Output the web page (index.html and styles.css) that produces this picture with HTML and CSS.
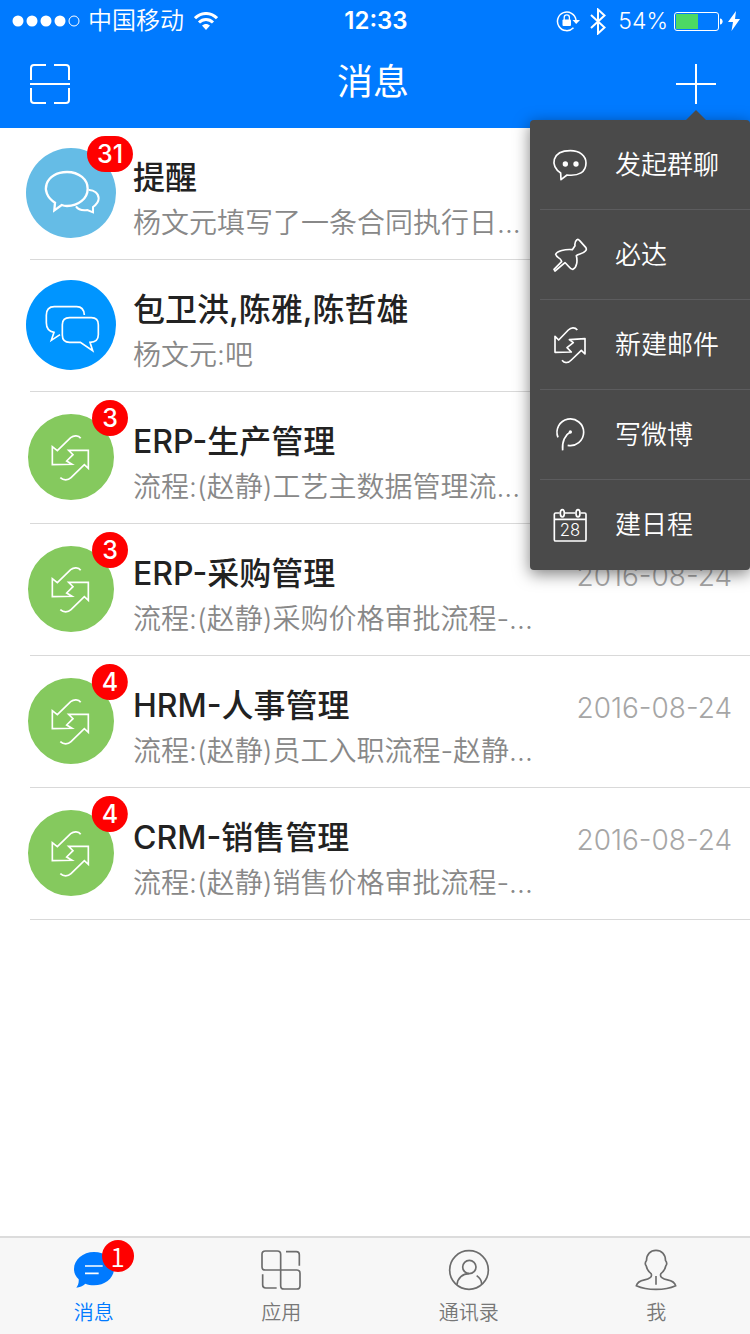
FILE: index.html
```html
<!DOCTYPE html>
<html lang="zh-CN">
<head>
<meta charset="utf-8">
<meta name="viewport" content="width=device-width, initial-scale=1">
<title>消息</title>
<link rel="stylesheet" href="styles.css">
</head>
<body>
<svg class="defs" aria-hidden="true">
  <symbol id="flow" viewBox="0 0 270 270">
    <path d="M164 79C158 70 144 69 134 77L94 116L79 104V158L138 157L122 147L141 128L128 115H187V169L175 158L135 197C126 206 112 206 103 197"/>
  </symbol>
</svg>
<header class="header">
  <div class="status">
    <div class="status-side">
      <svg class="signal" viewBox="0 0 68 12" aria-hidden="true"><g fill="#fff"><circle cx="6" cy="6" r="5.5"/><circle cx="20" cy="6" r="5.5"/><circle cx="34" cy="6" r="5.5"/><circle cx="48" cy="6" r="5.5"/></g><circle cx="62" cy="6" r="5" fill="none" stroke="#fff"/></svg>
      <span class="carrier">中国移动</span>
      <svg class="wifi" viewBox="0 0 24 18" aria-hidden="true"><g fill="none" stroke="#fff" stroke-width="3"><path d="M1 6.2C7.200-.1 16.800-.1 23 6.200"/><path d="M5 10.500C9 6.500 15 6.500 19 10.500"/></g><path d="M8 13.600C10.300 11.400 13.700 11.400 16 13.600L12 18Z" fill="#fff"/></svg>
    </div>
    <time class="clock">12:33</time>
    <div class="status-side status-right">
      <svg class="lock" viewBox="0 0 24 22" aria-hidden="true"><path d="M17.500 17.800A9.300 9.300 0 1 1 20 10" fill="none" stroke="#fff" stroke-width="1.500"/><path d="M16.500 10H24L20.200 14Z" fill="#fff"/><rect x="6.500" y="9.500" width="8.500" height="6.500" rx="1" fill="#fff"/><path d="M8.200 10V7.500a2.600 2.600 0 0 1 5.200 0V10" fill="none" stroke="#fff" stroke-width="1.300"/></svg>
      <svg class="bluetooth" viewBox="0 0 16 27" aria-hidden="true"><path d="M1 7L14.500 19.500L8 25.500V1.500L14.500 7.500L1 20" fill="none" stroke="#fff" stroke-width="2"/></svg>
      <span class="percent">54%</span>
      <svg class="battery" viewBox="0 0 49 19" aria-hidden="true"><rect x=".5" y=".5" width="44" height="18" rx="2.500" fill="none" stroke="#fff"/><rect x="2" y="2" width="22" height="15" fill="#4cd964"/><path d="M46 6.500C49.500 6.500 49.500 12.500 46 12.500Z" fill="#fff"/></svg>
      <svg class="bolt" viewBox="0 0 12 20" aria-hidden="true"><path d="M8 0L0 11H5L3.500 20L12 8H7Z" fill="#fff"/></svg>
    </div>
  </div>
  <div class="nav">
    <button class="icon-button" type="button" aria-label="扫一扫">
      <svg viewBox="0 0 40 40"><path d="M1 16V4a3 3 0 0 1 3-3H16M24 1H36a3 3 0 0 1 3 3V16M0 20H40M1 24V36a3 3 0 0 0 3 3H16M24 39H36a3 3 0 0 0 3-3V24"/></svg>
    </button>
    <h1 class="page-title">消息</h1>
    <button class="icon-button icon-add" type="button" aria-label="新建" aria-expanded="true">
      <svg viewBox="0 0 40 40"><path d="M20 0V40M0 20H40"/></svg>
    </button>
  </div>
  <nav class="menu" aria-label="新建">
    <button class="menu-item" type="button"><svg class="menu-icon" viewBox="0 0 102 102"><path d="M23 75C-10 55-4 8 52 8C80 8 99 23 99 45C99 72 78 85 42 81L24 95Z"/><g fill="#fff" stroke="none"><circle cx="37" cy="48" r="8"/><circle cx="69" cy="48" r="8"/></g></svg><span>发起群聊</span></button>
    <button class="menu-item" type="button"><svg class="menu-icon" viewBox="0 0 102 102"><path d="M72 5Q64 12 66 23L58 35C36 33 12 39 8 49C11 60 22 60 24 66L26 71L3 94L6 99L36 74C46 82 52 96 60 94C72 88 74 68 70 53C78 46 88 50 98 38Q102 34 98 28L80 8Q76 3 72 5Z"/></svg><span>必达</span></button>
    <button class="menu-item" type="button"><svg class="menu-icon" viewBox="0 8 102 102"><path d="M73 14C66 5 54 6 46 14L17 44L6 33V81L55 80L42 67L61 52L49 43L96 40V86L85 75L55 104C46 114 34 114 27 105"/></svg><span>新建邮件</span></button>
    <button class="menu-item" type="button"><svg class="menu-icon" viewBox="0 4 102 102"><path d="M15 62A40 40 0 1 1 44 86M52 46C37 54 26 74 29 101"/><circle cx="52" cy="46" r="5" fill="#fff" stroke="none"/></svg><span>写微博</span></button>
    <button class="menu-item" type="button"><svg class="menu-icon" viewBox="0 0 102 102"><path d="M20 15H8Q4 15 4 19V95Q4 99 8 99H95Q99 99 99 95V19Q99 15 95 15H83M36 15H67M4 34H99"/><ellipse cx="28" cy="16" rx="6" ry="11"/><ellipse cx="75" cy="16" rx="6" ry="11"/><text class="menu-day" x="51" y="83">28</text></svg><span>建日程</span></button>
  </nav>
</header>

<main class="main">
  <ul class="list">
    <li class="entry"><div class="row">
      <div class="avatar avatar-notice"><svg viewBox="0 0 270 270"><path stroke-width="7" d="M87 164C38 134 58 72 123 72C160 72 185 95 185 122C185 151 158 174 123 174C117 174 112 173 107 171L85 187Z"/><path stroke-width="6" d="M188 126C204 125 218 137 218 151C218 163 210 171 201 177V193L184 186C170 188 156 184 150 175"/></svg><span class="badge">31</span></div>
      <h2 class="name">提醒</h2><p class="preview">杨文元填写了一条合同执行日...</p>
    </div></li>
    <li class="entry"><div class="row">
      <div class="avatar avatar-group"><svg viewBox="0 0 270 270"><path d="M175 105C174 88 167 80 152 80H85C68 80 61 90 61 106V128C61 146 68 154 84 157L76 181L102 164"/><path d="M131 113H196Q217 113 217 134V164Q217 186 192 187L200 212L163 187H131Q109 187 109 165V134Q109 113 131 113Z"/></svg></div>
      <h2 class="name">包卫洪,陈雅,陈哲雄</h2><p class="preview">杨文元:吧</p>
    </div></li>
    <li class="entry"><div class="row">
      <div class="avatar avatar-flow"><svg><use href="#flow"/></svg><span class="badge">3</span></div>
      <h2 class="name">ERP-生产管理</h2><p class="preview">流程:(赵静)工艺主数据管理流...</p>
    </div></li>
    <li class="entry"><div class="row">
      <div class="avatar avatar-flow"><svg><use href="#flow"/></svg><span class="badge">3</span></div>
      <h2 class="name">ERP-采购管理</h2><time class="date">2016-08-24</time><p class="preview">流程:(赵静)采购价格审批流程-...</p>
    </div></li>
    <li class="entry"><div class="row">
      <div class="avatar avatar-flow"><svg><use href="#flow"/></svg><span class="badge">4</span></div>
      <h2 class="name">HRM-人事管理</h2><time class="date">2016-08-24</time><p class="preview">流程:(赵静)员工入职流程-赵静...</p>
    </div></li>
    <li class="entry"><div class="row">
      <div class="avatar avatar-flow"><svg><use href="#flow"/></svg><span class="badge">4</span></div>
      <h2 class="name">CRM-销售管理</h2><time class="date">2016-08-24</time><p class="preview">流程:(赵静)销售价格审批流程-...</p>
    </div></li>
  </ul>
</main>

<nav class="tabs" aria-label="主导航">
  <a class="tab tab-active" href="#messages" aria-current="page"><span class="tab-icon"><svg viewBox="0 0 120 120"><path fill="#007aff" stroke="none" d="M60 6C93 6 120 29 120 56C120 84 93 106 60 106C50 106 42 104 34 101C28 108 16 112 7 113C13 105 15 97 14 88C5 80 0 69 0 57C0 29 27 6 60 6Z"/><path stroke="#fff" stroke-width="5" d="M33 48H86M33 70H74"/></svg><span class="tab-badge">1</span></span><span>消息</span></a>
  <a class="tab" href="#apps"><span class="tab-icon"><svg viewBox="0 0 120 120"><path d="M59 60H13Q3 60 3 50V13Q3 3 13 3H49Q59 3 59 13V60H107Q117 60 117 70V107Q117 117 107 117H69Q59 117 59 107V60M75 5H106Q115 5 115 14V47M5 73V105Q5 114 14 114H47"/></svg></span><span>应用</span></a>
  <a class="tab" href="#contacts"><span class="tab-icon"><svg viewBox="0 0 120 120"><circle cx="60" cy="60" r="58"/><circle cx="61" cy="51" r="20"/><path d="M24 104C26 84 41 71 60 71M83 77C93 84 98 92 98 102"/></svg></span><span>通讯录</span></a>
  <a class="tab" href="#me"><span class="tab-icon"><svg viewBox="0 3 122 120"><path d="M61 3C44 3 32 15 32 34C28 39 27 45 31 50C33 61 38 68 46 74C51 84 40 91 26 93C10 96 3 103 1 111C34 126 88 126 121 111C119 103 112 96 96 93C82 91 71 84 76 74C84 68 89 61 91 50C95 45 94 39 90 34C90 15 78 3 61 3Z"/><path d="M61 81V108"/></svg></span><span>我</span></a>
</nav>
</body>
</html>
```

FILE: styles.css
```css
* {
  box-sizing: border-box;
}

body {
  display: flex;
  flex-direction: column;
  min-height: 100vh;
  margin: 0;
  background: #fff;
  color: #222;
  font-family: Inter, "Noto Sans CJK SC", sans-serif;
}

button {
  padding: 0;
  border: 0;
  background: none;
  color: inherit;
  font: inherit;
  cursor: pointer;
}

svg {
  display: block;
  fill: none;
}

.defs {
  position: absolute;
  width: 0;
  height: 0;
}

/* Header */
.header {
  position: relative;
  z-index: 1;
  background: #007aff;
  color: #fff;
}

.status {
  display: grid;
  grid-template-columns: 1fr auto 1fr;
  align-items: center;
  height: 42px;
  padding: 0 10px 0 12px;
}

.status-side {
  display: flex;
  align-items: center;
}

.status-right {
  justify-content: flex-end;
}

.signal {
  width: 68px;
  height: 12px;
}

.carrier {
  margin: 0 10px 0 8px;
  font-size: 24px;
  line-height: 36px;
  font-weight: 350;
}

.wifi {
  width: 24px;
  height: 18px;
}

.clock {
  font-size: 24px;
  line-height: 36px;
  font-weight: 600;
}

.lock {
  width: 24px;
  height: 22px;
  margin-right: 10px;
}

.bluetooth {
  width: 16px;
  height: 27px;
  margin-right: 12px;
}

.percent {
  margin-right: 6px;
  font-size: 23px;
  line-height: 36px;
  font-weight: 350;
}

.battery {
  width: 49px;
  height: 19px;
  margin-right: 5px;
}

.bolt {
  width: 12px;
  height: 20px;
}

.nav {
  display: grid;
  grid-template-columns: 1fr auto 1fr;
  align-items: center;
  height: 86px;
  padding: 0 34px 2px 30px;
}

.icon-button {
  width: 40px;
  height: 40px;
}

.icon-button svg {
  stroke: #fff;
  stroke-width: 2;
}

.icon-add {
  justify-self: end;
}

.page-title {
  margin: 0;
  padding-bottom: 4px;
  font-size: 36px;
  line-height: 48px;
  font-weight: 400;
}

/* Drop-down menu */
.menu {
  position: absolute;
  top: 120px;
  right: 0;
  width: 220px;
  padding-left: 10px;
  border-radius: 4px;
  background: #4a4a4a;
  box-shadow: 0 4px 16px rgba(0, 0, 0, 0.5);
}

.menu::before {
  content: "";
  position: absolute;
  right: 44px;
  bottom: 100%;
  border: solid transparent;
  border-width: 0 10px 10px;
  border-bottom-color: #4a4a4a;
}

.menu-item {
  display: flex;
  align-items: center;
  gap: 28px;
  width: 100%;
  height: 90px;
  padding-left: 13px;
  border-bottom: 1px solid #5c5c5e;
  font-size: 26px;
  line-height: 40px;
  font-weight: 350;
  white-space: nowrap;
}

.menu-item:last-child {
  border-bottom: 0;
}

.menu-icon {
  width: 34px;
  height: 34px;
  overflow: visible;
  stroke: #fff;
  stroke-width: 5;
  stroke-linejoin: round;
}

.menu-day {
  fill: #fff;
  stroke: none;
  font-size: 50px;
  text-anchor: middle;
}

/* Conversation list */
.main {
  flex: 1;
}

.list {
  margin: 0;
  padding: 0;
  list-style: none;
}

.entry::after {
  content: "";
  display: block;
  height: 1px;
  margin-left: 30px;
  background: #d9d9d9;
}

.row {
  display: grid;
  grid-template-columns: 90px 1fr auto;
  grid-template-rows: 46px 44px;
  column-gap: 17px;
  align-items: center;
  padding: 27px 18px 14px 26px;
}

.avatar {
  position: relative;
  grid-row: 1 / 3;
  width: 90px;
  height: 90px;
  margin-top: -14px;
  border-radius: 50%;
}

.avatar svg {
  width: 90px;
  height: 90px;
  stroke: #fff;
  stroke-width: 5;
}

.avatar-notice {
  background: #65bce6;
}

.avatar-group {
  background: #0095ff;
}

.avatar-flow {
  border: 2px solid #fff;
  background: #85c95e;
}

.avatar-flow svg {
  margin: -2px;
}

.badge {
  position: absolute;
  top: -12px;
  left: 84px;
  min-width: 36px;
  padding: 1px 10px 0;
  border-radius: 18px;
  background: #f00;
  color: #fff;
  font-size: 25px;
  line-height: 35px;
  font-weight: 500;
  text-align: center;
  transform: translateX(-50%);
}

.avatar-flow .badge {
  top: -14px;
  left: 82px;
}

.name {
  margin: 0;
  font-size: 32px;
  line-height: 46px;
  font-weight: 500;
  white-space: nowrap;
}

.date {
  padding-top: 4px;
  color: #a6a6a6;
  font-size: 28px;
  line-height: 46px;
  font-weight: 350;
}

.preview {
  grid-column: 2 / 4;
  margin: 0;
  color: #888;
  font-size: 28px;
  line-height: 44px;
  font-weight: 350;
  white-space: nowrap;
}

/* Bottom tabs */
.tabs {
  display: grid;
  grid-template-columns: repeat(4, 1fr);
  border-top: 2px solid #dcdcdc;
  background: #f7f7f7;
}

.tab {
  display: flex;
  flex-direction: column;
  align-items: center;
  gap: 9px;
  padding: 12px 0 7px;
  color: #777;
  font-size: 20px;
  line-height: 28px;
  font-weight: 350;
  text-decoration: none;
}

.tab-active {
  color: #007aff;
}

.tab-icon {
  position: relative;
}

.tab-icon svg {
  width: 40px;
  height: 40px;
  overflow: visible;
  stroke: #6c6c6c;
  stroke-width: 5;
}

.tab-badge {
  position: absolute;
  top: -10px;
  left: 28px;
  width: 32px;
  border-radius: 16px;
  background: #f00;
  color: #fff;
  font-family: "Noto Sans CJK SC", sans-serif;
  font-size: 26px;
  line-height: 32px;
  text-align: center;
}
```
